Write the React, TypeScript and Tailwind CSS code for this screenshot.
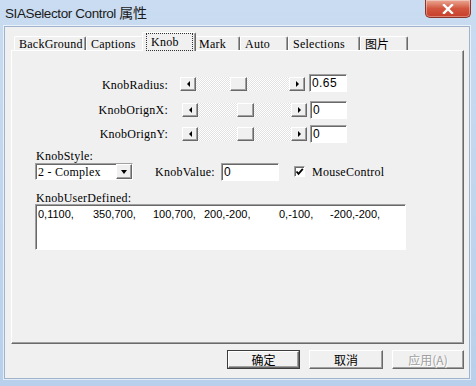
import React from "react";

const mono = "font-['Liberation_Serif',serif] text-[12px] tracking-[0.25px] text-black leading-[14px] whitespace-pre";
const raised = "bg-[#f0f0f0] border border-t-white border-l-white border-r-[#696969] border-b-[#696969] shadow-[inset_-1px_-1px_0_#a0a0a0]";
const sunken = "bg-white border border-t-[#a0a0a0] border-l-[#a0a0a0] border-r-white border-b-white shadow-[inset_1px_1px_0_#696969]";

function ScrollBar({ thumb }: { thumb: number }) {
  return (
    <div className="w-[125px] h-[14px] flex bg-[repeating-conic-gradient(#ffffff_0%_25%,#e2e2e2_0%_50%)] bg-[length:2px_2px]">
      <div className={`w-[16px] h-[14px] flex items-center justify-center ${raised}`}>
        <div className="w-0 h-0 border-y-[3px] border-y-transparent border-r-[3px] border-r-black" />
      </div>
      <div className="flex-1 relative">
        <div className={`absolute top-0 w-[17px] h-[14px] ${raised}`} style={{ left: thumb }} />
      </div>
      <div className={`w-[16px] h-[14px] flex items-center justify-center ${raised}`}>
        <div className="w-0 h-0 border-y-[3px] border-y-transparent border-l-[3px] border-l-black" />
      </div>
    </div>
  );
}

function Edit({ value, w }: { value: string; w: string }) {
  return (
    <div className={`${w} h-[18px] ${sunken} flex items-center pl-[2px] font-['Liberation_Sans',sans-serif] text-[12px] text-black leading-none tracking-[0.4px]`}>
      {value}
    </div>
  );
}

function Tab({ label, w, selected, cjk }: { label: string; w: string; selected?: boolean; cjk?: boolean }) {
  const font = cjk
    ? "font-['Noto_Sans_CJK_SC',sans-serif] text-[12px] leading-[14px] text-black"
    : mono;
  if (selected) {
    return (
      <div className={`${w} h-[19px] -mx-[2px] -mb-[1px] relative z-10 bg-[#f0f0f0] border-l border-t border-r border-l-white border-t-white border-r-[#696969] rounded-t-[2px] shadow-[inset_-1px_0_0_#a0a0a0] flex`}>
        <div className="flex-1 ml-[3px] mr-[2px] outline-1 -outline-offset-1 outline-dotted outline-[#333] pl-[5px] pt-[2px] flex items-start leading-[14px]">
          <span className={font}>{label}</span>
        </div>
      </div>
    );
  }
  return (
    <div className={`${w} h-[14px] border-l border-t border-r border-l-white border-t-white border-r-[#696969] rounded-t-[2px] shadow-[inset_-1px_0_0_#a0a0a0] pl-[4px] flex items-center`}>
      <span className={font}>{label}</span>
    </div>
  );
}

export default function App() {
  return (
    <div className="w-[476px] h-[386px] bg-linear-to-b from-[#c9dcf1] to-[#b8d0eb] flex flex-col overflow-hidden">
      {/* title bar */}
      <div className="h-[26px] flex items-start justify-between">
        <div className="pl-[5px] pt-[3px] font-['Liberation_Sans',sans-serif] text-[13.5px] tracking-[-0.4px] text-[#1b1b1b] leading-[18px]">
          SIASelector Control <span className="font-['Noto_Sans_CJK_SC',sans-serif] text-[14px]">属性</span>
        </div>
        <div className="mr-[5px] w-[46px] h-[18px] rounded-b-[5px] bg-linear-to-b from-[#e9a895] via-[#d2563f] to-[#c73e2b] border border-t-0 border-[#8a3326] shadow-[inset_0_0_0_1px_rgba(255,255,255,0.35)] flex items-center justify-center">
          <svg width="12" height="10" viewBox="0 0 12 10">
            <path d="M2 1 L10 9 M10 1 L2 9" stroke="#ffffff" strokeWidth="2.4" strokeLinecap="square" />
          </svg>
        </div>
      </div>

      {/* client */}
      <div className="ml-[4px] w-[466px] h-[353px] bg-[#f0f0f0] border border-[#9fb4cc] shadow-[0_0_0_1px_rgba(255,255,255,0.6)] flex flex-col">
        {/* tabs */}
        <div className="h-[23px] flex items-end pl-[9px]">
          <Tab label="BackGround" w="w-[72px]" />
          <Tab label="Captions" w="w-[58px]" />
          <Tab label="Knob" w="w-[54px]" selected />
          <Tab label="Mark" w="w-[46px]" />
          <Tab label="Auto" w="w-[48px]" />
          <Tab label="Selections" w="w-[72px]" />
          <Tab label="图片" w="w-[48px]" cjk />
        </div>

        {/* panel */}
        <div className="ml-[6px] w-[453px] h-[294px] border border-t-white border-l-white border-r-[#696969] border-b-[#696969] shadow-[inset_-1px_-1px_0_#a0a0a0] flex flex-col">
          {/* row 1 */}
          <div className="mt-[23px] h-[18px] flex items-center">
            <div className={`w-[156px] text-right ${mono} pt-[4px]`}>KnobRadius:</div>
            <div className="ml-[12px] pt-[2px]"><ScrollBar thumb={34} /></div>
            <div className="ml-[4px]"><Edit value="0.65" w="w-[38px]" /></div>
          </div>
          {/* row 2 */}
          <div className="mt-[9px] h-[18px] flex items-center">
            <div className={`w-[156px] text-right ${mono}`}>KnobOrignX:</div>
            <div className="ml-[14px]"><ScrollBar thumb={39} /></div>
            <div className="ml-[3px]"><Edit value="0" w="w-[37px]" /></div>
          </div>
          {/* row 3 */}
          <div className="mt-[6px] h-[18px] flex items-center">
            <div className={`w-[156px] text-right ${mono}`}>KnobOrignY:</div>
            <div className="ml-[14px]"><ScrollBar thumb={39} /></div>
            <div className="ml-[3px]"><Edit value="0" w="w-[37px]" /></div>
          </div>

          {/* KnobStyle */}
          <div className={`mt-[6px] pl-[24px] ${mono}`}>KnobStyle:</div>
          <div className="h-[17px] flex items-center pl-[23px]">
            <div className={`w-[98px] h-[17px] ${sunken} flex items-center justify-between`}>
              <span className={`${mono} pl-[2px]`}>2 - Complex</span>
              <div className={`w-[16px] h-[15px] flex items-center justify-center ${raised}`}>
                <div className="w-0 h-0 border-x-[3.5px] border-x-transparent border-t-[4px] border-t-black" />
              </div>
            </div>
            <div className={`ml-[22px] w-[66px] ${mono}`}>KnobValue:</div>
            <Edit value="0" w="w-[58px]" />
            <div className="ml-[15px] w-[11px] h-[11px] bg-white border border-t-[#a0a0a0] border-l-[#a0a0a0] border-r-white border-b-white shadow-[inset_1px_1px_0_#696969] flex items-center justify-center">
              <svg width="9" height="9" viewBox="0 0 9 9">
                <path d="M1.5 4.5 L3.5 6.8 L7.8 1.8" stroke="#000" strokeWidth="1.8" fill="none" />
              </svg>
            </div>
            <div className={`ml-[7px] ${mono}`}>MouseControl</div>
          </div>

          {/* KnobUserDefined */}
          <div className={`mt-[11px] pl-[24px] ${mono} h-[13px]`}>KnobUserDefined:</div>
          <div className="pl-[23px]">
            <div className={`w-[371px] h-[46px] ${sunken} pl-[2px] pt-[2px] flex items-start font-['Liberation_Sans',sans-serif] text-[11px] text-black leading-[14px] whitespace-pre`}>
              <span className="w-[55px] shrink-0">0,1100,</span>
              <span className="w-[60px] shrink-0">350,700,</span>
              <span className="w-[51px] shrink-0">100,700,</span>
              <span className="w-[75px] shrink-0">200,-200,</span>
              <span className="w-[51px] shrink-0">0,-100,</span>
              <span className="shrink-0">-200,-200,</span>
            </div>
          </div>
        </div>

        {/* buttons */}
        <div className="mt-[6px] pl-[222px] flex">
          <div className="w-[73px] h-[19px] border border-[#3c3c3c] flex">
            <div className={`flex-1 ${raised} flex items-center justify-center font-['Noto_Sans_CJK_SC',sans-serif] text-[12px] text-black leading-none`}>确定</div>
          </div>
          <div className={`ml-[9px] w-[74px] h-[19px] ${raised} flex items-center justify-center font-['Noto_Sans_CJK_SC',sans-serif] text-[12px] text-black leading-none`}>取消</div>
          <div className={`ml-[9px] w-[72px] h-[19px] ${raised} flex items-center justify-center font-['Noto_Sans_CJK_SC',sans-serif] text-[12px] text-[#a0a0a0] leading-none [text-shadow:1px_1px_0_#fff]`}>应用(A)</div>
        </div>
      </div>
    </div>
  );
}
